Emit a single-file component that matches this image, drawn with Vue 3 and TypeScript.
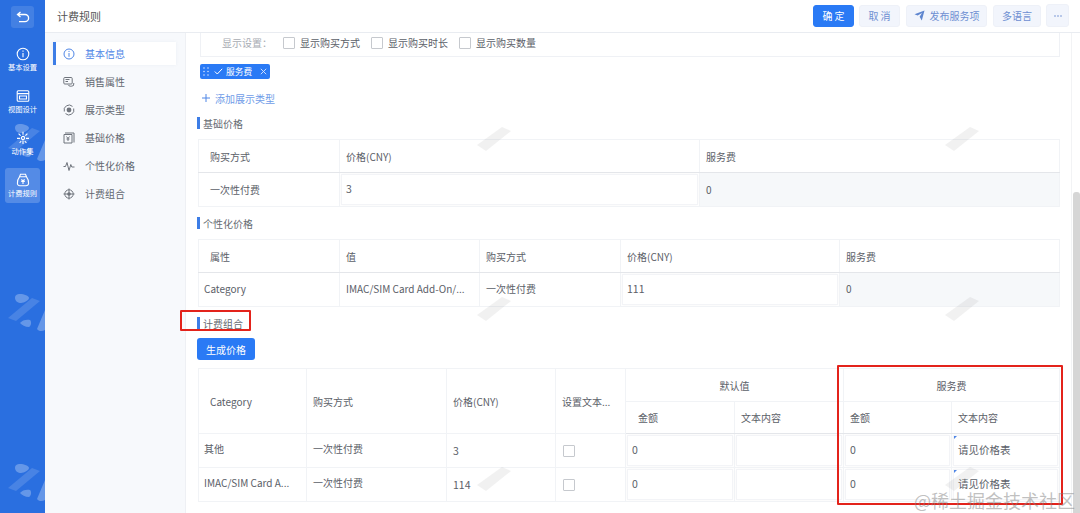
<script setup lang="ts">
const rail = [
  { label: '基本设置', icon: 'info' },
  { label: '视图设计', icon: 'view' },
  { label: '动作集', icon: 'spark' },
  { label: '计费规则', icon: 'bag', active: true },
]
const nav = [
  { label: '基本信息', icon: 'info', active: true },
  { label: '销售属性', icon: 'tag' },
  { label: '展示类型', icon: 'rotate' },
  { label: '基础价格', icon: 'yen' },
  { label: '个性化价格', icon: 'wave' },
  { label: '计费组合', icon: 'target' },
]
const railMarks = [122, 292, 462].map((y) => ({ left: '8px', top: `${y}px` }))
const stripes: { left: string; top: string }[] = []
for (const x of [477, 945]) for (const y of [127, 297, 467]) stripes.push({ left: `${x}px`, top: `${y}px` })
const checks = ['显示购买方式', '显示购买时长', '显示购买数量']
</script>

<template>
  <div class="app">
    <aside class="rail">
      <div class="back">
        <svg width="14" height="12" viewBox="0 0 14 12" fill="none" stroke="#fff" stroke-width="1.3"><path d="M4.5 1 1.5 3.5l3 2.5M2 3.5h7a3.6 3.6 0 0 1 0 7.2H3" /></svg>
      </div>
      <div v-for="r in rail" :key="r.label" class="rail-item" :class="{ on: r.active }">
        <svg width="14" height="14" viewBox="0 0 14 14" fill="none" stroke="#fff" stroke-width="1.1">
          <template v-if="r.icon === 'info'"><circle cx="7" cy="7" r="5.8" /><path d="M7 6v4.2M7 3.6v1.2" /></template>
          <template v-else-if="r.icon === 'view'"><rect x="1.2" y="1.8" width="11.6" height="10.4" rx="1" /><path d="M1.2 4.6h11.6M3.5 7h7v3h-7z" /></template>
          <template v-else-if="r.icon === 'spark'"><path d="M7 .8v3M2.6 2.6l2 2M11.4 2.6l-2 2M1 7.4h3M10 7.4h3M3.6 12l1.6-2M10.4 12 8.8 10M7 9.5v3.5" /><circle cx="7" cy="7" r="1.6" /></template>
          <template v-else><path d="M4.5 1.2h5l1 2.6H3.5zM3.5 3.8C1.8 6 1 8 1.4 10.5c.2 1.4 1.2 2.3 2.6 2.3h6c1.4 0 2.4-.9 2.6-2.3.4-2.5-.4-4.500-2.100-6.700z" /><path d="M5.400 6.400 7 8l1.600-1.600M5.200 8.400h3.600M7 8v3" /></template>
        </svg>
        <span>{{ r.label }}</span>
      </div>
      <svg v-for="(m, i) in railMarks" :key="i" class="rail-mark" :style="m" width="37" height="40" viewBox="0 0 37 40">
        <path d="M6 1c4 0 9 2 9 4s-5 5-8 5-6-2-6-5 2-4 5-4z" fill="#fff" fill-opacity=".28" transform="translate(6 1)" />
        <path d="M0 26 24 6l8 3L8 29z" fill="#fff" fill-opacity=".14" />
        <path d="M12 31c2-3 7-4 10-3 2 2 1 6-1 7-4 0-7-2-9-4z" fill="#fff" fill-opacity=".28" />
        <path d="M29 37 37 18v20c-3 2-7 1-8-1z" fill="#fff" fill-opacity=".28" />
      </svg>
    </aside>

    <div class="page">
      <header class="top">
        <h1>计费规则</h1>
        <div class="actions">
          <button class="btn primary w41">确 定</button>
          <button class="btn w41">取 消</button>
          <button class="btn send">
            <svg width="11" height="11" viewBox="0 0 11 11" fill="#5f86cf"><path d="M.5 4.300 10.500.5 7.800 10.500 5.600 6.800 8 3 3.600 5.600z" /></svg>
            发布服务项
          </button>
          <button class="btn lang">多语言</button>
          <button class="btn more" aria-label="更多">
            <svg width="8" height="2" viewBox="0 0 8 2" fill="#6e8fd2"><circle cx="1" cy="1" r=".8" /><circle cx="4" cy="1" r=".8" /><circle cx="7" cy="1" r=".8" /></svg>
          </button>
        </div>
      </header>

      <div class="body">
        <nav class="side">
          <a v-for="n in nav" :key="n.label" class="side-item" :class="{ on: n.active }">
            <svg width="12" height="12" viewBox="0 0 12 12" fill="none" stroke="currentColor" stroke-width="1">
              <template v-if="n.icon === 'info'"><circle cx="6" cy="6" r="5" /><path d="M6 5v3.800M6 2.900v1.100" /></template>
              <template v-else-if="n.icon === 'tag'"><rect x=".8" y="1.500" width="8.400" height="6.500" rx="1" /><path d="M2.500 3.500h4M2.500 5.500h2.500M5 8.800c1 1.500 3 2 5.500.7l.3-2.500" /></template>
              <template v-else-if="n.icon === 'rotate'"><path d="M1.300 7.500A5 5 0 0 1 9.500 2.400M10.700 4.500A5 5 0 0 1 2.500 9.600" /><circle cx="6" cy="6" r="2.400" fill="currentColor" stroke="none" /></template>
              <template v-else-if="n.icon === 'yen'"><path d="M2 1h9v9.500M1 2.500h8V11H1z" /><path d="M3.500 4.500 5 6.500l1.500-2M5 6.500v2.500M3.500 7h3" /></template>
              <template v-else-if="n.icon === 'wave'"><path d="M.5 6.500h2L4 2.500l2 8 1.800-6 1 2.500h2.700" /></template>
              <template v-else><circle cx="6" cy="6" r="4.200" /><path d="M.5 6h11M6 .5v11" /><circle cx="6" cy="6" r="1.800" fill="currentColor" stroke="none" /></template>
            </svg>
            <span>{{ n.label }}</span>
          </a>
        </nav>

        <main class="content">
          <section class="card">
            <span class="card-label">显示设置：</span>
            <label v-for="c in checks" :key="c" class="check"><i class="box"></i>{{ c }}</label>
          </section>

          <div class="tag">
            <svg width="6" height="9" viewBox="0 0 6 9" fill="#cfe0ff"><circle cx="1" cy="1" r=".8" /><circle cx="5" cy="1" r=".8" /><circle cx="1" cy="4.500" r=".8" /><circle cx="5" cy="4.500" r=".8" /><circle cx="1" cy="8" r=".8" /><circle cx="5" cy="8" r=".8" /></svg>
            <svg class="tick" width="9" height="7" viewBox="0 0 9 7" fill="none" stroke="#fff" stroke-width="1"><path d="m.8 3.500 2.500 2.500L8.200.8" /></svg>
            <span>服务费</span>
            <svg class="close" width="7" height="7" viewBox="0 0 7 7" stroke="#dbe7ff" stroke-width=".9"><path d="m.8.8 5.400 5.400M6.200.8.800 6.200" /></svg>
          </div>

          <div class="add">
            <svg class="plus" width="8" height="8" viewBox="0 0 8 8" stroke="#4f86e6" stroke-width="1"><path d="M4 0v8M0 4h8" /></svg>
            添加展示类型
          </div>

          <h2 class="head">基础价格</h2>
          <table class="grid t1">
            <colgroup><col class="c141" /><col class="c360" /><col /></colgroup>
            <tbody>
              <tr class="hrow"><th class="pad">购买方式</th><th>价格(CNY)</th><th>服务费</th></tr>
              <tr class="row"><td class="pad">一次性付费</td><td class="field"><div class="inp">3</div></td><td class="dis">0</td></tr>
            </tbody>
          </table>

          <h2 class="head">个性化价格</h2>
          <table class="grid t2">
            <colgroup><col class="c141" /><col class="c140" /><col class="c141" /><col class="c219" /><col /></colgroup>
            <tbody>
              <tr class="hrow"><th class="pad">属性</th><th>值</th><th>购买方式</th><th>价格(CNY)</th><th>服务费</th></tr>
              <tr class="row"><td class="first">Category</td><td>IMAC/SIM Card Add-On/...</td><td>一次性付费</td><td class="field"><div class="inp">111</div></td><td class="dis">0</td></tr>
            </tbody>
          </table>

          <h2 class="head last">计费组合</h2>
          <button class="gen">生成价格</button>

          <table class="grid t3">
            <colgroup><col class="c108" /><col class="c140" /><col class="c109" /><col class="c70" /><col class="c109" /><col class="c109" /><col class="c108" /><col /></colgroup>
            <tbody>
              <tr class="h1">
                <th rowspan="2" class="pad">Category</th>
                <th rowspan="2">购买方式</th>
                <th rowspan="2">价格(CNY)</th>
                <th rowspan="2">设置文本...</th>
                <th colspan="2" class="mid">默认值</th>
                <th colspan="2" class="mid">服务费</th>
              </tr>
              <tr class="h2"><th class="pad12">金额</th><th>文本内容</th><th class="pad8">金额</th><th>文本内容</th></tr>
              <tr class="row3">
                <td class="first">其他</td><td>一次性付费</td><td class="num">3</td><td class="ck"><i class="box"></i></td>
                <td class="field"><div class="inp">0</div></td><td class="field"><div class="inp"></div></td>
                <td class="field"><div class="inp">0</div></td>
                <td class="field"><div class="inp flag">请见价格表</div></td>
              </tr>
              <tr class="row3">
                <td class="first">IMAC/SIM Card A...</td><td>一次性付费</td><td class="num">114</td><td class="ck"><i class="box"></i></td>
                <td class="field"><div class="inp">0</div></td><td class="field"><div class="inp"></div></td>
                <td class="field"><div class="inp">0</div></td>
                <td class="field"><div class="inp flag">请见价格表</div></td>
              </tr>
            </tbody>
          </table>
        </main>

        <div class="scroll"><div class="thumb"></div></div>
      </div>
    </div>

    <svg v-for="(s, i) in stripes" :key="i" class="stripe" :style="s" width="34" height="24" viewBox="0 0 34 24"><path d="M0 18 25 0l9 4-25 20z" fill="#8a8a8a" fill-opacity=".12" /></svg>
    <div class="mark mark-a"></div>
    <div class="mark mark-b"></div>
    <div class="wm">@稀土掘金技术社区</div>
  </div>
</template>

<style>
html, body { margin: 0; height: 100%; overflow: hidden; background: #fff; }
</style>

<style scoped>
.app {
  position: relative;
  display: flex;
  width: 1080px;
  height: 513px;
  overflow: hidden;
  font-family: "Noto Sans CJK SC", "Liberation Sans", sans-serif;
  font-size: 10px;
  color: #5b6068;
}
.rail {
  flex: 0 0 45px;
  position: relative;
  display: flex;
  flex-direction: column;
  align-items: center;
  background: #2a6fe0;
  color: #fff;
}
.back {
  display: flex;
  align-items: center;
  justify-content: center;
  width: 23px;
  height: 22px;
  margin-top: 6px;
  margin-bottom: 14px;
  border-radius: 3px;
  background: rgba(255, 255, 255, .12);
}
.rail-item {
  display: flex;
  flex-direction: column;
  align-items: center;
  justify-content: center;
  gap: 1px;
  width: 35px;
  height: 35px;
  margin-bottom: 7px;
  border-radius: 3px;
  font-size: 7.300px;
  line-height: 10px;
  white-space: nowrap;
  position: relative;
  z-index: 1;
}
.rail-item.on { background: rgba(255, 255, 255, .2); }
.rail-mark { position: absolute; }
.page { flex: 1; min-width: 0; display: flex; flex-direction: column; }
.top {
  flex: 0 0 33px;
  box-sizing: border-box;
  display: flex;
  align-items: center;
  justify-content: space-between;
  padding: 0 11px 0 12px;
  border-bottom: 1px solid #e9ecf1;
  background: #fff;
}
h1 { margin: 0; font-size: 11px; font-weight: 400; color: #555; }
.actions { display: flex; gap: 5px; align-items: center; margin-top: -1px; }
.btn {
  height: 22px;
  padding: 0;
  border: 1px solid #eef1f8;
  border-radius: 3px;
  background: #f2f5fc;
  color: #6e8fd2;
  font: inherit;
  display: flex;
  align-items: center;
  justify-content: center;
  gap: 5px;
}
.primary { background: #2a7af5; border-color: #2a7af5; color: #fff; }
.w41 { width: 41px; }
.send { width: 81px; margin: 0 1px; }
.lang { width: 48px; }
.more { width: 23px; height: 23px; }
.body { flex: 1; display: flex; min-height: 0; }
.side {
  flex: 0 0 141px;
  box-sizing: border-box;
  padding: 9px 9px 0 8px;
  background: #f7f9fc;
  border-right: 1px solid #eef0f4;
}
.side-item {
  display: flex;
  align-items: center;
  gap: 10px;
  height: 23px;
  margin-bottom: 5px;
  padding-left: 12px;
  color: #626770;
  font-size: 10px;
  border-left: 3px solid transparent;
  box-sizing: border-box;
}
.side-item svg { margin-left: -5px; color: #6f747c; }
.side-item.on { background: #fff; color: #4f86e6; border-left-color: #3d7de6; box-shadow: 0 0 3px rgba(90, 110, 150, .08); }
.side-item.on svg { color: #4f86e6; }
.content {
  flex: 0 0 885px;
  box-sizing: border-box;
  padding: 0 11px 0 12px;
  min-width: 0;
}
.card {
  box-sizing: border-box;
  display: flex;
  align-items: center;
  height: 24px;
  margin-left: 2px;
  padding: 0 0 4px 21px;
  border: 1px solid #eff1f5;
  border-top: 0;
  font-size: 10px;
}
.card-label { width: 61px; color: #a8acb3; }
.check { display: flex; align-items: center; margin-right: 11px; gap: 5px; }
.box {
  display: block;
  box-sizing: border-box;
  width: 12px;
  height: 12px;
  border: 1px solid #c6c9ce;
  border-radius: 1px;
  background: #fff;
}
.tag {
  display: flex;
  align-items: center;
  box-sizing: border-box;
  width: 70px;
  height: 15px;
  margin: 7px 0 0 2px;
  padding-left: 3px;
  border-radius: 2px;
  background: #2a7af5;
  color: #fff;
  font-size: 8.700px;
  white-space: nowrap;
}
.tick { margin: 0 3px 0 5px; }
.close { margin-left: 8px; }
.add { display: flex; align-items: center; height: 14px; margin: 12px 0 0 4px; color: #6f9ce8; font-size: 10px; }
.plus { margin-right: 5px; }
.head {
  margin: 11px 0 9px -1px;
  height: 14px;
  display: flex;
  align-items: center;
  font-size: 10px;
  font-weight: 400;
  color: #666b72;
}
.head::before { content: ""; width: 3px; height: 12px; margin-right: 3px; background: #3d7de6; }
.grid + .head { margin-top: 9px; margin-bottom: 9px; }
.grid + .head.last { margin-bottom: 8px; }
.grid {
  width: 862px;
  table-layout: fixed;
  border-collapse: collapse;
  background: #fff;
  border-bottom: 1px solid #e4e6ea;
}
.grid th, .grid td {
  padding: 0 0 0 6px;
  border: 1px solid #f1f3f6;
  font-weight: 400;
  text-align: left;
  white-space: nowrap;
  overflow: hidden;
  color: #5b6068;
}
.grid .pad { padding-left: 11px; }
.grid .first { padding-left: 5px; }
.c141 { width: 141px; } .c360 { width: 360px; } .c140 { width: 140px; } .c219 { width: 219px; }
.c108 { width: 108px; } .c109 { width: 109px; } .c70 { width: 70px; }
.hrow { height: 33px; }
.hrow th { border-bottom-color: #e4e6ea; }
.row { height: 34px; }
.t2 .row td { padding-bottom: 3px; }
.t2 .row .dis { padding-bottom: 2px; }
.t2 .row .field { padding: 1px; }
.row3 td { padding-bottom: 4px; }
.grid .dis { background: #f6f8fa; }
.grid .field { padding: 1px; }
.grid .row3 .num { padding-bottom: 0; }
.grid .row3 .ck { padding-bottom: 0; }
.inp {
  box-sizing: border-box;
  height: 100%;
  min-height: 31px;
  display: flex;
  align-items: center;
  padding-left: 4px;
  padding-bottom: 2px;
  border: 1px solid #f3f4f7;
  box-shadow: 0 0 2px rgba(90, 100, 120, .05);
  position: relative;
  font-size: 10.500px;
}
.t2 .inp { padding-bottom: 3px; }
.gen {
  display: block;
  width: 58px;
  height: 22px;
  margin: 0 0 8px -1px;
  padding: 0;
  border: 0;
  border-radius: 3px;
  background: #2a7af5;
  color: #fff;
  font: inherit;
}
.h1 { height: 33px; }
.h2 { height: 32px; }
.h2 th { border-bottom-color: #e4e6ea; }
.grid .h2 .pad12 { padding-left: 12px; }
.grid .mid { text-align: center; padding-left: 0; }
.row3 { height: 34px; }
.grid .num { font-size: 10.500px; }
.grid .ck { padding-left: 7px; }
.flag::before {
  content: "";
  position: absolute;
  left: 0;
  top: 0;
  border-style: solid;
  border-width: 3px 3px 0 0;
  border-color: #4f86e6 transparent transparent transparent;
}
.scroll { flex: 1; position: relative; background: #fff; border-left: 1px solid #f2f3f5; }
.thumb { position: absolute; left: 1px; right: 0; top: 159px; bottom: 0; background: #d6d6d6; border-radius: 3px 3px 0 0; }
.stripe { position: absolute; pointer-events: none; }
.mark {
  position: absolute;
  box-sizing: border-box;
  border: 2px solid #e3231b;
  border-radius: 1px;
  pointer-events: none;
}
.mark-a { left: 180px; top: 310px; width: 71px; height: 21px; }
.mark-b { left: 837px; top: 365px; width: 226px; height: 140px; }
.wm {
  position: absolute;
  left: 914px;
  top: 488px;
  font-size: 18px;
  line-height: 24px;
  white-space: nowrap;
  color: rgba(130, 130, 130, .5);
  pointer-events: none;
}
</style>
